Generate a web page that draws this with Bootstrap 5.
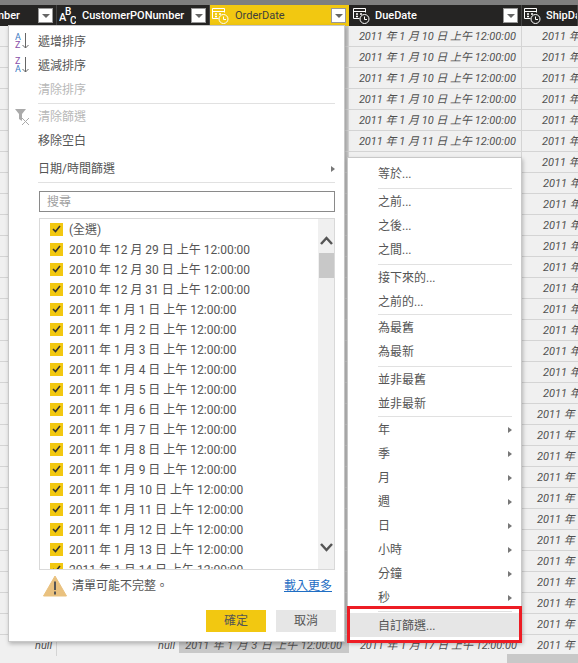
<!DOCTYPE html>
<html lang="zh-Hant">
<head>
<meta charset="utf-8">
<title>OrderDate filter</title>
<link href="https://cdn.jsdelivr.net/npm/bootstrap@5.3.0/dist/css/bootstrap.min.css" rel="stylesheet">
<style>
html,body{height:100%;overflow:hidden}
body{background:#f0f0f0;color:#555;font:12px/16px Roboto,"Noto Sans CJK TC",sans-serif}
.stage{width:578px;height:663px;overflow:hidden;position:relative}
.topband{height:5px;background:#7f7f7f}
.headrow{height:21px;background:#252423;color:#fff;font-weight:500;font-size:11px}
.c1{width:57px}.c2{width:153px}.c3{width:139px}.c4{width:173px}.c5{width:56px}
.hcell{padding:0 3px 0 2px;overflow:hidden;white-space:nowrap;border-right:1px solid #444}
.hcell.sel{background:#f2c811;color:#403f3c;font-weight:400;border:0}
.hlabel{margin-left:6px;flex:1 1 auto}
.hlabel.due{margin-left:5px}
.hfirst{margin-right:18px}
.hbtn{width:15px;height:15px;background:#fff;border:1px solid #999;flex:none;display:flex;align-items:center;justify-content:center}
.hbtn::after{content:"";border:4px solid transparent;border-top-color:#666;border-bottom:0}
.abc{width:17px;height:20px;flex:none}
.gridrow{height:21px;color:#505050;font-style:italic;font-size:11px;white-space:nowrap}
.gcell{height:21px;border-right:1px solid #d4d4d4;border-bottom:1px solid #d4d4d4;overflow:hidden;padding:3px 5px 0 0;text-align:right;flex:none}
.gcell.sel{background:#c8c8c8}
.gcell.ship{text-align:left;border:0;border-bottom:1px solid #d4d4d4}
.p20{padding-left:20px}.p21{padding-left:21px}.p15{padding-left:15px}
.lastc1{border-bottom:0;padding-right:4px}
.lastc2{width:122px;border:0;padding-right:4px}
.lastc3{width:170px;height:18px;border:0;word-spacing:.8px;padding-right:7px!important}
.lastc4{border:0}
.hscroll{position:absolute;left:507px;bottom:0;width:71px;height:9px;background:#c8c8c8}
.menu-a,.menu-b{position:absolute;background:#fff;border:1px solid #c8c8c8;box-shadow:1px 2px 4px rgba(0,0,0,.25);color:#555}
.menu-a{left:8px;top:25px;width:337px;height:617px;padding:3px 9px 0 29px}
.menu-b{left:347px;top:157px;width:175px;height:485px;padding:3px 9px 0 30px}
.mi{height:24px;display:flex;align-items:center;justify-content:space-between;position:relative;white-space:nowrap;padding-top:1px}
.mi.off{color:#b8b8b8}
.mi.go::after{content:"";border:3px solid transparent;border-left:4px solid #777;border-right:0}
.sep{height:1px;background:#e1e1e1;margin:3px 0 0}
.sep.tight{margin-top:1px}
.sep.mid{margin-top:2px}
.lico{position:absolute;left:-23px;top:3px;width:20px;height:20px}
.searchbox{height:21px;margin:8px 0 6px 1px;width:296px;border:1px solid #8a8a8a;border-radius:0;padding:0 7px;font-size:12px;line-height:18px;min-height:0;color:#555}
.searchbox::placeholder{color:#a0a0a0}
.listbox{height:352px;width:296px;margin-left:1px;border:1px solid #d9d9d9;border-right:0;overflow:hidden;position:relative}
.chk-row{height:20px;padding-left:10px;display:flex;align-items:center;gap:6px;white-space:nowrap}
.chk-text{padding-top:1px}
.chk{width:13px;height:13px;background:#f2c811;flex:none;display:flex;align-items:center;justify-content:center}
.vscroll{position:absolute;right:0;top:0;bottom:0;width:17px;background:#f0f0f0;border-right:1px solid #d9d9d9}
.vthumb{position:absolute;left:1px;top:34px;width:15px;height:25px;background:#c8c8c8}
.vup,.vdown{position:absolute;left:2px;width:13px;height:9px}
.vup{top:17px}.vdown{top:324px}
.warnrow{height:30px;margin-top:1px;padding-left:5px;gap:5px;width:296px}
.warnico{width:24px;height:22px;flex:none}
.loadmore{color:#1f6ec4;margin-left:auto;margin-right:2px}
.btnrow{margin-top:9px;gap:10px;width:298px;justify-content:flex-end}
.pbtn{width:60px;height:22px;padding:0;border:0;border-radius:0;font-size:12px;line-height:23px;color:#555;background:#e6e6e6}
.pbtn.pri{background:#f2c811}
.hoverbar{background:#e6e6e6;margin:1px -7px 0 -28px;padding:1px 7px 0 28px}
.redbox{position:absolute;left:347px;top:606px;width:175px;height:37px;border:3px solid #ed1c24;pointer-events:none}
</style>
</head>
<body>
<div class="stage">
<div class="topband"></div>
<div class="headrow d-flex">
  <div class="hcell c1 d-flex align-items-center justify-content-end"><span class="hfirst flex-none">PurchaseOrderNumber</span><span class="hbtn"></span></div>
  <div class="hcell c2 d-flex align-items-center"><svg class="abc" viewBox="0 0 17 20"><text x="0" y="15" font-size="11" fill="#fff" font-family="Roboto">A</text><text x="6" y="9" font-size="10" fill="#fff" font-family="Roboto">B</text><text x="11" y="18" font-size="10" fill="#fff" font-family="Roboto">C</text></svg><span class="hlabel">CustomerPONumber</span><span class="hbtn"></span></div>
  <div class="hcell sel c3 d-flex align-items-center"><svg class="abc" viewBox="0 0 17 20"><use href="#dt"/></svg><span class="hlabel">OrderDate</span><span class="hbtn"></span></div>
  <div class="hcell c4 d-flex align-items-center ps-1"><svg class="abc" viewBox="0 0 17 20"><use href="#dt"/></svg><span class="hlabel due">DueDate</span><span class="hbtn"></span></div>
  <div class="hcell c5 d-flex align-items-center"><svg class="abc" viewBox="0 0 17 20"><use href="#dt"/></svg><span class="hlabel due">ShipDate</span></div>
</div>
<svg width="0" height="0" class="position-absolute"><defs><g id="dt" fill="none" stroke="#fff"><path d="M.5 2.500h12v4M.5 2.500v10h6M.5 5.500h12"/><path d="M3 8h2M7 8h2M3 10.500h2" stroke-width="1.500"/><circle cx="11.500" cy="13" r="4.500"/><path d="M11.500 10.500V13.500H14"/></g></defs></svg>

<div class="gridrow d-flex"><div class="gcell c1"></div><div class="gcell c2"></div><div class="gcell sel c3"></div><div class="gcell c4">2011 年 1 月 10 日 上午 12:00:00</div><div class="gcell ship c5 p20">2011 年 1 月</div></div>
<div class="gridrow d-flex"><div class="gcell c1"></div><div class="gcell c2"></div><div class="gcell sel c3"></div><div class="gcell c4">2011 年 1 月 10 日 上午 12:00:00</div><div class="gcell ship c5 p20">2011 年 1 月</div></div>
<div class="gridrow d-flex"><div class="gcell c1"></div><div class="gcell c2"></div><div class="gcell sel c3"></div><div class="gcell c4">2011 年 1 月 10 日 上午 12:00:00</div><div class="gcell ship c5 p20">2011 年 1 月</div></div>
<div class="gridrow d-flex"><div class="gcell c1"></div><div class="gcell c2"></div><div class="gcell sel c3"></div><div class="gcell c4">2011 年 1 月 10 日 上午 12:00:00</div><div class="gcell ship c5 p20">2011 年 1 月</div></div>
<div class="gridrow d-flex"><div class="gcell c1"></div><div class="gcell c2"></div><div class="gcell sel c3"></div><div class="gcell c4">2011 年 1 月 10 日 上午 12:00:00</div><div class="gcell ship c5 p20">2011 年 1 月</div></div>
<div class="gridrow d-flex"><div class="gcell c1"></div><div class="gcell c2"></div><div class="gcell sel c3"></div><div class="gcell c4">2011 年 1 月 11 日 上午 12:00:00</div><div class="gcell ship c5 p20">2011 年 1 月</div></div>
<div class="gridrow d-flex"><div class="gcell c1"></div><div class="gcell c2"></div><div class="gcell sel c3"></div><div class="gcell c4"></div><div class="gcell ship c5 p20">2011 年 1 月</div></div>
<div class="gridrow d-flex"><div class="gcell c1"></div><div class="gcell c2"></div><div class="gcell sel c3"></div><div class="gcell c4"></div><div class="gcell ship c5 p21">2011 年 1 月</div></div>
<div class="gridrow d-flex"><div class="gcell c1"></div><div class="gcell c2"></div><div class="gcell sel c3"></div><div class="gcell c4"></div><div class="gcell ship c5 p21">2011 年 1 月</div></div>
<div class="gridrow d-flex"><div class="gcell c1"></div><div class="gcell c2"></div><div class="gcell sel c3"></div><div class="gcell c4"></div><div class="gcell ship c5 p21">2011 年 1 月</div></div>
<div class="gridrow d-flex"><div class="gcell c1"></div><div class="gcell c2"></div><div class="gcell sel c3"></div><div class="gcell c4"></div><div class="gcell ship c5 p21">2011 年 1 月</div></div>
<div class="gridrow d-flex"><div class="gcell c1"></div><div class="gcell c2"></div><div class="gcell sel c3"></div><div class="gcell c4"></div><div class="gcell ship c5 p21">2011 年 1 月</div></div>
<div class="gridrow d-flex"><div class="gcell c1"></div><div class="gcell c2"></div><div class="gcell sel c3"></div><div class="gcell c4"></div><div class="gcell ship c5 p21">2011 年 1 月</div></div>
<div class="gridrow d-flex"><div class="gcell c1"></div><div class="gcell c2"></div><div class="gcell sel c3"></div><div class="gcell c4"></div><div class="gcell ship c5 p21">2011 年 1 月</div></div>
<div class="gridrow d-flex"><div class="gcell c1"></div><div class="gcell c2"></div><div class="gcell sel c3"></div><div class="gcell c4"></div><div class="gcell ship c5 p21">2011 年 1 月</div></div>
<div class="gridrow d-flex"><div class="gcell c1"></div><div class="gcell c2"></div><div class="gcell sel c3"></div><div class="gcell c4"></div><div class="gcell ship c5 p21">2011 年 1 月</div></div>
<div class="gridrow d-flex"><div class="gcell c1"></div><div class="gcell c2"></div><div class="gcell sel c3"></div><div class="gcell c4"></div><div class="gcell ship c5 p21">2011 年 1 月</div></div>
<div class="gridrow d-flex"><div class="gcell c1"></div><div class="gcell c2"></div><div class="gcell sel c3"></div><div class="gcell c4"></div><div class="gcell ship c5 p21">2011 年 1 月</div></div>
<div class="gridrow d-flex"><div class="gcell c1"></div><div class="gcell c2"></div><div class="gcell sel c3"></div><div class="gcell c4"></div><div class="gcell ship c5 p15">2011 年 1 月</div></div>
<div class="gridrow d-flex"><div class="gcell c1"></div><div class="gcell c2"></div><div class="gcell sel c3"></div><div class="gcell c4"></div><div class="gcell ship c5 p15">2011 年 1 月</div></div>
<div class="gridrow d-flex"><div class="gcell c1"></div><div class="gcell c2"></div><div class="gcell sel c3"></div><div class="gcell c4"></div><div class="gcell ship c5 p15">2011 年 1 月</div></div>
<div class="gridrow d-flex"><div class="gcell c1"></div><div class="gcell c2"></div><div class="gcell sel c3"></div><div class="gcell c4"></div><div class="gcell ship c5 p15">2011 年 1 月</div></div>
<div class="gridrow d-flex"><div class="gcell c1"></div><div class="gcell c2"></div><div class="gcell sel c3"></div><div class="gcell c4"></div><div class="gcell ship c5 p15">2011 年 1 月</div></div>
<div class="gridrow d-flex"><div class="gcell c1"></div><div class="gcell c2"></div><div class="gcell sel c3"></div><div class="gcell c4"></div><div class="gcell ship c5 p15">2011 年 1 月</div></div>
<div class="gridrow d-flex"><div class="gcell c1"></div><div class="gcell c2"></div><div class="gcell sel c3"></div><div class="gcell c4"></div><div class="gcell ship c5 p15">2011 年 1 月</div></div>
<div class="gridrow d-flex"><div class="gcell c1"></div><div class="gcell c2"></div><div class="gcell sel c3"></div><div class="gcell c4"></div><div class="gcell ship c5 p15">2011 年 1 月</div></div>
<div class="gridrow d-flex"><div class="gcell c1"></div><div class="gcell c2"></div><div class="gcell sel c3"></div><div class="gcell c4"></div><div class="gcell ship c5 p15">2011 年 1 月</div></div>
<div class="gridrow d-flex"><div class="gcell c1"></div><div class="gcell c2"></div><div class="gcell sel c3"></div><div class="gcell c4"></div><div class="gcell ship c5 p15">2011 年 1 月</div></div>
<div class="gridrow d-flex"><div class="gcell c1"></div><div class="gcell c2"></div><div class="gcell sel c3"></div><div class="gcell c4"></div><div class="gcell ship c5 p15">2011 年 1 月</div></div>
<div class="gridrow d-flex"><div class="gcell c1 lastc1">null</div><div class="gcell lastc2">null</div><div class="gcell sel lastc3">2011 年 1 月 3 日 上午 12:00:00</div><div class="gcell lastc4 c4">2011 年 1 月 17 日 上午 12:00:00</div><div class="gcell ship c5 p15 border-0">2011 年 1 月</div></div>
<div class="hscroll"></div>

<div class="menu-a">
  <div class="mi"><svg class="lico" viewBox="0 0 20 20"><text x="0" y="7.500" font-size="9" fill="#3a78c2" font-family="Roboto">A</text><text x="0" y="16" font-size="9" fill="#8a4fa8" font-family="Roboto">Z</text><path d="M10.500 1V16M7.500 13l3 3 3-3" fill="none" stroke="#666"/></svg>遞增排序</div>
  <div class="mi"><svg class="lico" viewBox="0 0 20 20"><text x="0" y="7.500" font-size="9" fill="#8a4fa8" font-family="Roboto">Z</text><text x="0" y="16" font-size="9" fill="#3a78c2" font-family="Roboto">A</text><path d="M10.500 1V16M7.500 13l3 3 3-3" fill="none" stroke="#666"/></svg>遞減排序</div>
  <div class="mi off">清除排序</div>
  <div class="sep mid"></div>
  <div class="mi off"><svg class="lico" viewBox="0 0 20 20"><path d="M0 2H11L7 7V14L4 12V7Z" fill="#aaa"/><path d="M7 11l7 7M14 11l-7 7" stroke="#aaa" fill="none"/></svg>清除篩選</div>
  <div class="mi">移除空白</div>
  <div class="mi go mt-1">日期/時間篩選</div>
  <div class="sep mid"></div>
  <input class="form-control searchbox" placeholder="搜尋">
  <div class="listbox">
    <div class="chk-row"><span class="chk"><svg width="9" height="8" viewBox="0 0 9 8"><path d="M1 4l2.500 2.500L8 1" fill="none" stroke="#333" stroke-width="1.600"/></svg></span><span class="chk-text">(全選)</span></div>
    <div class="chk-row"><span class="chk"><svg width="9" height="8" viewBox="0 0 9 8"><path d="M1 4l2.500 2.500L8 1" fill="none" stroke="#333" stroke-width="1.600"/></svg></span><span class="chk-text">2010 年 12 月 29 日 上午 12:00:00</span></div>
    <div class="chk-row"><span class="chk"><svg width="9" height="8" viewBox="0 0 9 8"><path d="M1 4l2.500 2.500L8 1" fill="none" stroke="#333" stroke-width="1.600"/></svg></span><span class="chk-text">2010 年 12 月 30 日 上午 12:00:00</span></div>
    <div class="chk-row"><span class="chk"><svg width="9" height="8" viewBox="0 0 9 8"><path d="M1 4l2.500 2.500L8 1" fill="none" stroke="#333" stroke-width="1.600"/></svg></span><span class="chk-text">2010 年 12 月 31 日 上午 12:00:00</span></div>
    <div class="chk-row"><span class="chk"><svg width="9" height="8" viewBox="0 0 9 8"><path d="M1 4l2.500 2.500L8 1" fill="none" stroke="#333" stroke-width="1.600"/></svg></span><span class="chk-text">2011 年 1 月 1 日 上午 12:00:00</span></div>
    <div class="chk-row"><span class="chk"><svg width="9" height="8" viewBox="0 0 9 8"><path d="M1 4l2.500 2.500L8 1" fill="none" stroke="#333" stroke-width="1.600"/></svg></span><span class="chk-text">2011 年 1 月 2 日 上午 12:00:00</span></div>
    <div class="chk-row"><span class="chk"><svg width="9" height="8" viewBox="0 0 9 8"><path d="M1 4l2.500 2.500L8 1" fill="none" stroke="#333" stroke-width="1.600"/></svg></span><span class="chk-text">2011 年 1 月 3 日 上午 12:00:00</span></div>
    <div class="chk-row"><span class="chk"><svg width="9" height="8" viewBox="0 0 9 8"><path d="M1 4l2.500 2.500L8 1" fill="none" stroke="#333" stroke-width="1.600"/></svg></span><span class="chk-text">2011 年 1 月 4 日 上午 12:00:00</span></div>
    <div class="chk-row"><span class="chk"><svg width="9" height="8" viewBox="0 0 9 8"><path d="M1 4l2.500 2.500L8 1" fill="none" stroke="#333" stroke-width="1.600"/></svg></span><span class="chk-text">2011 年 1 月 5 日 上午 12:00:00</span></div>
    <div class="chk-row"><span class="chk"><svg width="9" height="8" viewBox="0 0 9 8"><path d="M1 4l2.500 2.500L8 1" fill="none" stroke="#333" stroke-width="1.600"/></svg></span><span class="chk-text">2011 年 1 月 6 日 上午 12:00:00</span></div>
    <div class="chk-row"><span class="chk"><svg width="9" height="8" viewBox="0 0 9 8"><path d="M1 4l2.500 2.500L8 1" fill="none" stroke="#333" stroke-width="1.600"/></svg></span><span class="chk-text">2011 年 1 月 7 日 上午 12:00:00</span></div>
    <div class="chk-row"><span class="chk"><svg width="9" height="8" viewBox="0 0 9 8"><path d="M1 4l2.500 2.500L8 1" fill="none" stroke="#333" stroke-width="1.600"/></svg></span><span class="chk-text">2011 年 1 月 8 日 上午 12:00:00</span></div>
    <div class="chk-row"><span class="chk"><svg width="9" height="8" viewBox="0 0 9 8"><path d="M1 4l2.500 2.500L8 1" fill="none" stroke="#333" stroke-width="1.600"/></svg></span><span class="chk-text">2011 年 1 月 9 日 上午 12:00:00</span></div>
    <div class="chk-row"><span class="chk"><svg width="9" height="8" viewBox="0 0 9 8"><path d="M1 4l2.500 2.500L8 1" fill="none" stroke="#333" stroke-width="1.600"/></svg></span><span class="chk-text">2011 年 1 月 10 日 上午 12:00:00</span></div>
    <div class="chk-row"><span class="chk"><svg width="9" height="8" viewBox="0 0 9 8"><path d="M1 4l2.500 2.500L8 1" fill="none" stroke="#333" stroke-width="1.600"/></svg></span><span class="chk-text">2011 年 1 月 11 日 上午 12:00:00</span></div>
    <div class="chk-row"><span class="chk"><svg width="9" height="8" viewBox="0 0 9 8"><path d="M1 4l2.500 2.500L8 1" fill="none" stroke="#333" stroke-width="1.600"/></svg></span><span class="chk-text">2011 年 1 月 12 日 上午 12:00:00</span></div>
    <div class="chk-row"><span class="chk"><svg width="9" height="8" viewBox="0 0 9 8"><path d="M1 4l2.500 2.500L8 1" fill="none" stroke="#333" stroke-width="1.600"/></svg></span><span class="chk-text">2011 年 1 月 13 日 上午 12:00:00</span></div>
    <div class="chk-row"><span class="chk"><svg width="9" height="8" viewBox="0 0 9 8"><path d="M1 4l2.500 2.500L8 1" fill="none" stroke="#333" stroke-width="1.600"/></svg></span><span class="chk-text">2011 年 1 月 14 日 上午 12:00:00</span></div>
    <div class="vscroll">
      <svg class="vup" viewBox="0 0 13 9"><path d="M1 8l5.500-6L12 8" fill="none" stroke="#555" stroke-width="2.500"/></svg>
      <div class="vthumb"></div>
      <svg class="vdown" viewBox="0 0 13 9"><path d="M1 1l5.500 6L12 1" fill="none" stroke="#555" stroke-width="2.500"/></svg>
    </div>
  </div>
  <div class="warnrow d-flex align-items-center">
    <svg class="warnico" viewBox="0 0 24 22"><path d="M12 1L23.500 21H.5Z" fill="#e9c17f" stroke="#e9c17f" stroke-linejoin="round"/><path d="M12 6.500V15M12 16.500V19.500" stroke="#555" stroke-width="2" fill="none"/></svg>
    <span>清單可能不完整。</span>
    <a href="#" class="loadmore">載入更多</a>
  </div>
  <div class="btnrow d-flex">
    <button class="btn pbtn pri">確定</button>
    <button class="btn pbtn">取消</button>
  </div>
</div>

<div class="menu-b">
  <div class="mi">等於...</div>
  <div class="sep"></div>
  <div class="mi">之前...</div>
  <div class="mi">之後...</div>
  <div class="mi">之間...</div>
  <div class="sep"></div>
  <div class="mi">接下來的...</div>
  <div class="mi">之前的...</div>
  <div class="sep tight"></div>
  <div class="mi">為最舊</div>
  <div class="mi">為最新</div>
  <div class="sep"></div>
  <div class="mi">並非最舊</div>
  <div class="mi">並非最新</div>
  <div class="sep tight"></div>
  <div class="mi go">年</div>
  <div class="mi go">季</div>
  <div class="mi go">月</div>
  <div class="mi go">週</div>
  <div class="mi go">日</div>
  <div class="mi go">小時</div>
  <div class="mi go">分鐘</div>
  <div class="mi go">秒</div>
  <div class="sep mid"></div>
  <div class="mi hoverbar">自訂篩選...</div>
</div>
<div class="redbox"></div>
</div>
<script src="https://cdn.jsdelivr.net/npm/bootstrap@5.3.0/dist/js/bootstrap.bundle.min.js"></script>
</body>
</html>
